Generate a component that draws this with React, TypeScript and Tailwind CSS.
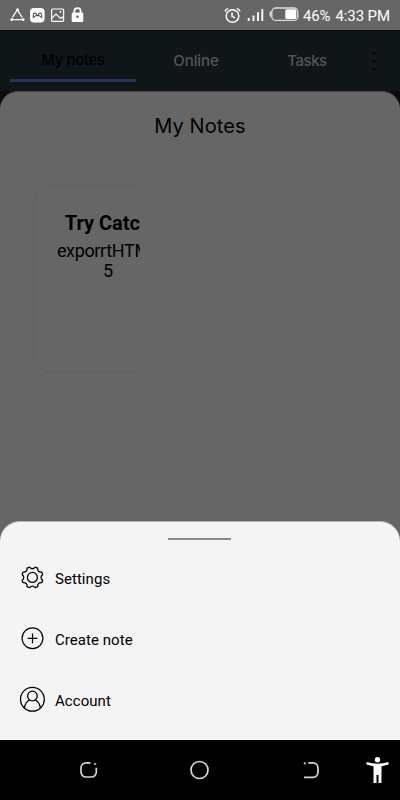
import React from 'react';

function StatusBar() {
  return (
    <header className="flex h-[30px] items-center bg-[#666] text-white">
      <svg className="h-[30px] w-[300px] shrink-0" viewBox="0 0 300 30" fill="none" stroke="currentColor">
        <path d="M13 19.7h9M12.300 17.500l5-7.500 5 7.500" strokeWidth="1.3" />
        <g fill="currentColor" stroke="none">
          <circle cx="17.5" cy="9.8" r="1.5" />
          <circle cx="11.800" cy="19.7" r="1.4" />
          <circle cx="23.200" cy="19.7" r="1.4" />
          <rect x="30" y="8" width="14.6" height="14.5" rx="4" />
          <path d="M73 12.500h9a1.300 1.300 0 0 1 1.300 1.300v6.900a1.300 1.300 0 0 1-1.300 1.300h-9a1.300 1.300 0 0 1-1.300-1.300v-6.900a1.300 1.300 0 0 1 1.300-1.300z" />
        </g>
        <path d="M33.300 17.500v-2.500c0-2.500 3-2.500 3.500 0h1.400c.5-2.500 3.500-2.500 3.500 0v2.500l-2.200-1.700h-4z" stroke="#555" strokeWidth="1.100" />
        <rect x="51.600" y="9" width="12" height="12.300" rx="1" strokeWidth="1.200" />
        <path d="M52 18l4-4 4.500 4.500 1.500-1.500 1.500 1.500" strokeWidth="1.100" />
        <circle cx="60.500" cy="12" r=".9" fill="currentColor" stroke="none" />
        <path d="M74.300 13v-1.600a3.200 3.200 0 0 1 6.400 0V13" strokeWidth="1.700" />
        <circle cx="77.500" cy="16.800" r="1.300" fill="#666" stroke="none" />
        <circle cx="232.500" cy="16" r="6.300" strokeWidth="1.500" />
        <path d="M232 12.600v3.700l3 1.600M225 11.400q.7-2 3-3M237 8.400q2.300 1 3 3" strokeWidth="1.500" />
        <path d="M248.700 18v3M253.500 15.500v5.500M258 12.300v8.700M262.300 9v12" strokeWidth="1.900" />
        <rect x="271.800" y="8" width="26" height="12.400" rx="4" stroke="#ddd" strokeWidth="1.300" />
        <path d="M270.800 11.500q-1.600 2.500 0 5" stroke="#ddd" strokeWidth="1.500" />
        <rect x="285.300" y="9.300" width="11" height="9.700" rx="1.500" fill="currentColor" stroke="none" />
      </svg>
      <div className="ml-[3px] flex gap-[5px] whitespace-nowrap pt-[2px] font-[Roboto,sans-serif] text-[15px] leading-[18px] tracking-[-0.12px]">
        <span>46%</span>
        <span>4:33 PM</span>
      </div>
    </header>
  );
}

function Tabs() {
  return (
    <nav className="flex h-[61px] items-start border-t border-[#090d0e] bg-[#101618] pl-[10px] font-[Inter,sans-serif] text-[15px] font-medium leading-[20px] text-[#555]">
      <div className="h-[51px] w-[126px] border-b-[3px] border-[#2a3160] pt-[19px] text-center tracking-[-0.35px] text-black">My notes</div>
      <div className="w-[120px] pt-[20px] text-center tracking-[-0.1px]">Online</div>
      <div className="w-[102px] pt-[20px] text-center tracking-[-0.45px]">Tasks</div>
      <svg className="mt-[17px] h-[26px] w-[32px]" viewBox="0 0 32 26" fill="#030405">
        <circle cx="16" cy="5" r="1.400" />
        <circle cx="16" cy="13" r="1.400" />
        <circle cx="16" cy="21" r="1.400" />
      </svg>
    </nav>
  );
}

function Notes() {
  return (
    <div className="h-[430px] bg-[#0c0c0c]">
      <main className="h-full rounded-t-[18px] border-t border-[#464849] bg-[#666] text-black">
        <h1 className="pt-[19px] text-center font-[Inter,sans-serif] text-[20px] leading-[30px] tracking-[0.1px]">My Notes</h1>
        <div className="ml-[33px] mt-[44px] h-[188px] w-[107px] overflow-hidden">
          <article className="h-full w-[150px] rounded-[20px] border border-[#606060] pt-[25px] text-center font-[Roboto,sans-serif]">
            <h2 className="whitespace-nowrap text-[20px] font-bold leading-[25px]">Try Catch</h2>
            <p className="mt-[5px] text-[18px] leading-[20px] tracking-[-0.36px]">exporrtHTML<br />5</p>
          </article>
        </div>
      </main>
    </div>
  );
}

function SettingsIcon() {
  return (
    <svg className="size-[26px]" viewBox="0 0 26 26" fill="none" stroke="black" strokeWidth="1.300" strokeLinejoin="round">
      <circle cx="13.400" cy="13.400" r="5" />
      <g transform="translate(.4 .4)">
        <path d="M10.200 2.700Q13 6 15.800 2.700L18.300 3.700Q18 8 22.300 7.700L23.300 10.200Q20 13 23.300 15.800L22.300 18.300Q18 18 18.300 22.300L15.800 23.300Q13 20 10.200 23.300L7.700 22.300Q8 18 3.700 18.300L2.700 15.800Q6 13 2.700 10.200L3.700 7.700Q8 8 7.700 3.700Z" />
      </g>
    </svg>
  );
}

function CreateIcon() {
  return (
    <svg className="size-[26px]" viewBox="0 0 26 26" fill="none" stroke="black" strokeWidth="1.200">
      <circle cx="13.500" cy="13.300" r="10.400" />
      <path d="M13.500 8.500v9.800M8.600 13.400h9.800" />
    </svg>
  );
}

function AccountIcon() {
  return (
    <svg className="size-[26px]" viewBox="0 0 26 26" fill="none" stroke="black" strokeWidth="1.300">
      <circle cx="13.400" cy="13.300" r="11.900" />
      <circle cx="13.400" cy="10" r="4.800" />
      <path d="M5.400 21.900c.7-4.700 2.700-6.700 5.200-7.900M21.400 21.900c-.7-4.700-2.700-6.700-5.200-7.900" />
    </svg>
  );
}

function MenuRow({ icon, label }: { icon: React.ReactNode; label: string }) {
  return (
    <li className="flex h-[61px] items-start gap-[10px] pl-[19px]">
      {icon}
      <span className="pt-[6px] font-[Roboto,sans-serif] text-[15px] leading-[18px] tracking-[0.05px]">{label}</span>
    </li>
  );
}

function BottomSheet() {
  return (
    <div className="h-[219px] bg-[#666]">
      <section className="flex h-full flex-col rounded-t-[20px] border-t border-[#b5b5b5] bg-[#f4f4f4] pt-[16px] text-black">
        <div className="ml-[168px] h-[3px] w-[63px] border-y border-[#888] bg-[#444]" />
        <ul className="mt-[24px]">
          <MenuRow icon={<SettingsIcon />} label="Settings" />
          <MenuRow icon={<CreateIcon />} label="Create note" />
          <MenuRow icon={<AccountIcon />} label="Account" />
        </ul>
      </section>
    </div>
  );
}

function SystemNavigation() {
  return (
    <footer className="h-[60px] bg-black">
      <svg className="h-[60px] w-[400px]" viewBox="0 0 400 60" fill="none" stroke="#d6d6d6" strokeWidth="1.700">
        <path d="M90.500 22.800h-4.500a5 5 0 0 0-5 5V32a5 5 0 0 0 5 5h5.300a5 5 0 0 0 5-5v-4.300M94 24h2.200" />
        <circle cx="199.500" cy="30" r="8.500" />
        <path d="M303.800 23.300h2M308.300 22.800h4.700a5 5 0 0 1 5 5V32a5 5 0 0 1-5 5.300h-9" />
        <g fill="white" stroke="none">
          <circle cx="377.500" cy="19.800" r="2.700" />
          <path d="M366.500 22q5.500 1.800 11 1.800t11-1.800v2.500l-7 1.700V43h-3v-8h-2v8h-3V26.200l-7-1.700z" />
        </g>
      </svg>
    </footer>
  );
}

export default function App() {
  return (
    <div className="h-[800px] w-[400px] overflow-hidden bg-black">
      <StatusBar />
      <Tabs />
      <Notes />
      <BottomSheet />
      <SystemNavigation />
    </div>
  );
}
